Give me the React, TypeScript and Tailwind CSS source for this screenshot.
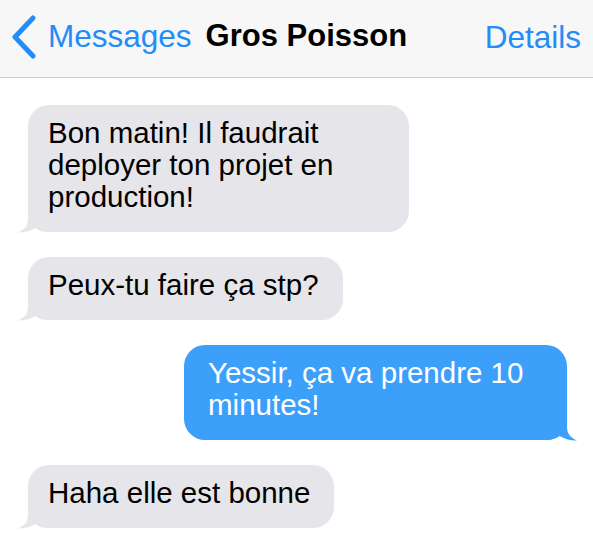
import React from "react";

const font = { fontFamily: '"Liberation Sans", Arial, Helvetica, sans-serif' };

function TailLeft() {
  return (
    <svg
      className="absolute left-[-10px] bottom-[-1px]"
      width="32"
      height="26"
      viewBox="0 0 32 26"
    >
      <path
        d="M10 0 L10 12 C10 19 6 23 0 25.5 C5 26 11 24.5 17.5 21 C21 23.5 25 25 32 25 L32 0 Z"
        fill="#e5e5ea"
      />
    </svg>
  );
}

function TailRight() {
  return (
    <svg
      className="absolute right-[-10px] bottom-[-1px] -scale-x-100"
      width="32"
      height="26"
      viewBox="0 0 32 26"
    >
      <path
        d="M10 0 L10 12 C10 19 6 23 0 25.5 C5 26 11 24.5 17.5 21 C21 23.5 25 25 32 25 L32 0 Z"
        fill="#3c9ff9"
      />
    </svg>
  );
}

function Received({ text }: { text: string }) {
  return (
    <div className="relative self-start ml-[28px] w-fit max-w-[381px]">
      <TailLeft />
      <div className="relative rounded-[21px] bg-[#e5e5ea] pl-[20px] pr-[24px] pt-[12px] pb-[19px] text-[29.5px] leading-[32px] text-black">
        {text}
      </div>
    </div>
  );
}

function Sent({ text }: { text: string }) {
  return (
    <div className="relative self-end mr-[26px] w-fit max-w-[383px]">
      <TailRight />
      <div className="relative rounded-[21px] bg-[#3c9ff9] pl-[24px] pr-[24px] pt-[12px] pb-[19px] text-[29.5px] leading-[32px] text-white">
        {text}
      </div>
    </div>
  );
}

export default function App() {
  return (
    <div className="w-[593px] h-[540px] bg-white overflow-hidden" style={font}>
      <div className="h-[78px] bg-[#f7f7f7] border-b border-[#cdcdcd] flex items-start">
        <svg
          className="ml-[10px] mt-[15px] shrink-0"
          width="26"
          height="44"
          viewBox="0 0 26 44"
        >
          <polyline
            points="23,3 5,22 23,41"
            fill="none"
            stroke="#238cf8"
            strokeWidth="5"
            strokeLinecap="round"
            strokeLinejoin="round"
          />
        </svg>
        <div className="ml-[12px] mt-[21px] text-[31.5px] leading-[31px] text-[#238cf8]">
          Messages
        </div>
        <div className="ml-[14px] mt-[20px] text-[31px] leading-[31px] font-bold text-black">
          Gros Poisson
        </div>
        <div className="ml-auto mr-[12px] mt-[22px] text-[31.5px] leading-[31px] text-[#238cf8]">
          Details
        </div>
      </div>
      <div className="flex flex-col gap-[25px] pt-[27px]">
        <Received text="Bon matin! Il faudrait deployer ton projet en production!" />
        <Received text="Peux-tu faire ça stp?" />
        <Sent text="Yessir, ça va prendre 10 minutes!" />
        <Received text="Haha elle est bonne" />
      </div>
    </div>
  );
}
